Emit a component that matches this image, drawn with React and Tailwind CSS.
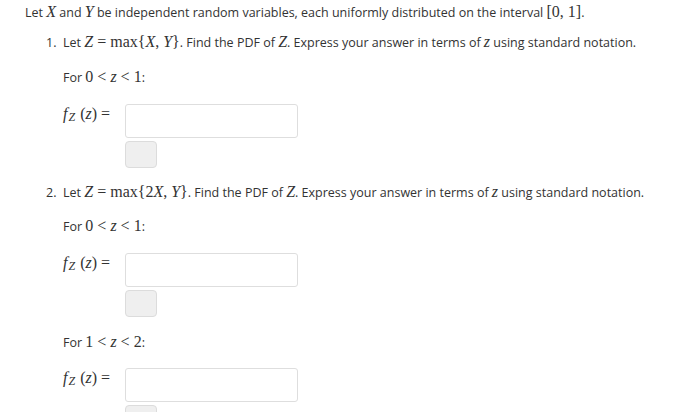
const sans = { fontFamily: '"Open Sans", "Liberation Sans", sans-serif' };

const M = ({ children }) => (
  <span className="font-['Liberation_Serif'] text-[16px] leading-none">{children}</span>
);

const I = ({ children }) => <span className="italic">{children}</span>;

const Eq = () => <span className="mx-[4px]">=</span>;

const Answer = () => (
  <div className="flex flex-col">
    <div className="flex items-start">
      <div className="w-[62px] whitespace-nowrap font-['Liberation_Serif'] text-[16px] leading-[19px]">
        <I>f</I>
        <span className="relative top-[2px] ml-[1px] text-[12px] italic leading-none">Z</span>
        <span className="ml-[5px]">(</span>
        <I>z</I>)<span className="ml-[4px]">=</span>
      </div>
      <div className="h-[34px] w-[173px] rounded-[3px] border border-[#dedede] bg-white" />
    </div>
    <div className="ml-[62px] mt-[3px] h-[27px] w-[32px] rounded-[4px] border border-[#dcdcdc] bg-[#efefef]" />
  </div>
);

const Range = ({ a, b, className }) => (
  <div className={`h-5 leading-5 ${className}`}>
    For{' '}
    <M>
      {a}
      <span className="mx-[4px]">&lt;</span>
      <I>z</I>
      <span className="mx-[4px]">&lt;</span>
      {b}
    </M>
    :
  </div>
);

const Question = ({ n, expr }) => (
  <div className="flex h-5 leading-5">
    <span className="w-[38px] pl-[21px]">{n}.</span>
    <span>
      Let{' '}
      <M>
        <I>Z</I>
        <Eq />
        max{'{'}
        {expr}
        {'}'}
      </M>
      . Find the PDF of{' '}
      <M>
        <I>Z</I>
      </M>
      . Express your answer in terms of{' '}
      <M>
        <I>z</I>
      </M>{' '}
      using standard notation.
    </span>
  </div>
);

export default function App() {
  return (
    <div className="h-[412px] overflow-hidden bg-white text-[12.5px] text-[#333]" style={sans}>
      <div className="h-5 pl-[25px] mt-[3px] leading-5">
        Let{' '}
        <M>
          <I>X</I>
        </M>{' '}
        and{' '}
        <M>
          <I>Y</I>
        </M>{' '}
        be independent random variables, each uniformly distributed on the interval <M>[0, 1]</M>.
      </div>

      <div className="mt-[10px] pl-[25px]">
        <Question
          n={1}
          expr={
            <>
              <I>X</I>, <I>Y</I>
            </>
          }
        />
        <div className="pl-[38px]">
          <Range a="0" b="1" className="mt-[15px]" />
          <div className="mt-[16px]">
            <Answer />
          </div>
        </div>

        <div className="mt-[15px]">
          <Question
            n={2}
            expr={
              <>
                2<I>X</I>, <I>Y</I>
              </>
            }
          />
        </div>
        <div className="pl-[38px]">
          <Range a="0" b="1" className="mt-[14px]" />
          <div className="mt-[16px]">
            <Answer />
          </div>
          <Range a="1" b="2" className="mt-[16px]" />
          <div className="mt-[15px]">
            <Answer />
          </div>
        </div>
      </div>
    </div>
  );
}
